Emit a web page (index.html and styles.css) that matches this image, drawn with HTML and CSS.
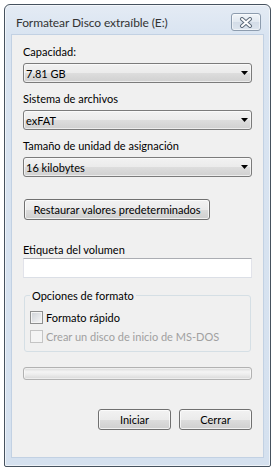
FILE: index.html
```html
<!DOCTYPE html>
<html lang="es">
<head>
<meta charset="utf-8">
<title>Formatear Disco extraíble (E:)</title>
<link rel="stylesheet" href="styles.css">
</head>
<body>
<div class="window">
  <div class="titlebar">
    <span class="title">Formatear Disco extraíble (E:)</span>
    <div class="close">
      <svg width="14" height="11" viewBox="0 0 14 11">
        <path d="M3 2 L11 9 M11 2 L3 9" stroke="#5f6c7b" stroke-width="4" stroke-linecap="round" fill="none"/>
        <path d="M3 2 L11 9 M11 2 L3 9" stroke="#ffffff" stroke-width="2" stroke-linecap="round" fill="none"/>
      </svg>
    </div>
  </div>
  <div class="client">
    <div class="field">
      <div class="label">Capacidad:</div>
      <div class="combo"><span>7.81 GB</span><svg class="arrow" width="7" height="4" viewBox="0 0 7 4"><polygon points="0,0 7,0 3.5,4" fill="#000"/></svg></div>
    </div>
    <div class="field">
      <div class="label">Sistema de archivos</div>
      <div class="combo"><span>exFAT</span><svg class="arrow" width="7" height="4" viewBox="0 0 7 4"><polygon points="0,0 7,0 3.5,4" fill="#000"/></svg></div>
    </div>
    <div class="field">
      <div class="label">Tamaño de unidad de asignación</div>
      <div class="combo"><span>16 kilobytes</span><svg class="arrow" width="7" height="4" viewBox="0 0 7 4"><polygon points="0,0 7,0 3.5,4" fill="#000"/></svg></div>
    </div>
    <div class="btn restore">Restaurar valores predeterminados</div>
    <div class="label vol-label">Etiqueta del volumen</div>
    <div class="textbox"></div>
    <fieldset class="group">
      <legend>Opciones de formato</legend>
      <div class="check-row"><span class="checkbox"></span><span>Formato rápido</span></div>
      <div class="check-row disabled"><span class="checkbox"></span><span>Crear un disco de inicio de MS-DOS</span></div>
    </fieldset>
    <div class="progress"></div>
    <div class="actions">
      <div class="btn action">Iniciar</div>
      <div class="btn action">Cerrar</div>
    </div>
  </div>
</div>
</body>
</html>
```
FILE: styles.css
```css
* { box-sizing: border-box; }
html, body { margin: 0; padding: 0; background: #ffffff; }
body {
  font-family: Lato, "Noto Sans", sans-serif;
  font-size: 11px;
  line-height: 15px;
  color: #000;
}
.window {
  margin: 4px 0 0 4px;
  width: 267px;
  border: 1px solid #46525f;
  border-radius: 6px 6px 2px 2px;
  background: linear-gradient(#e4ebf4, #d9e4f1 30px, #d5e1ef);
  box-shadow: inset 0 0 0 1px rgba(255,255,255,0.6);
  padding: 0 6px 8px;
}
.titlebar {
  display: flex;
  justify-content: space-between;
  height: 29px;
}
.title {
  padding: 10px 0 0 5px;
  font-size: 12px;
  letter-spacing: -0.1px;
  color: #333;
}
.close {
  margin: 8px 3px 0 0;
  width: 30px;
  height: 18px;
  border: 1px solid #8d9cae;
  border-radius: 3px;
  background: linear-gradient(#f1f5f9, #e1e8f0 50%, #d3dce7 51%, #dde5ee);
  box-shadow: inset 0 0 0 1px rgba(255,255,255,0.5);
  display: flex;
  align-items: center;
  justify-content: center;
}
.client {
  height: 424px;
  border: 1px solid #c2d1e3;
  background: #f0f0f0;
  padding: 9px 11px 0;
}
.field + .field { margin-top: 8px; }
.combo {
  margin-top: 4px;
  height: 20px;
  border: 1px solid #7b7b7b;
  border-radius: 3px;
  background: linear-gradient(#f2f2f2, #ebebeb 50%, #dddddd 51%, #d0d0d0);
  box-shadow: inset 0 0 0 1px rgba(255,255,255,0.6);
  display: flex;
  align-items: center;
  justify-content: space-between;
  padding: 0 3px 0 2px;
}
.arrow { display: block; }
.btn {
  height: 21px;
  border: 1px solid #707070;
  border-radius: 3px;
  background: linear-gradient(#f2f2f2, #ebebeb 50%, #dddddd 51%, #cfcfcf);
  box-shadow: inset 0 0 0 1px rgba(255,255,255,0.7);
  display: flex;
  align-items: center;
  justify-content: center;
}
.restore {
  margin: 22px 0 0 1px;
  width: 186px;
}
.vol-label { margin-top: 22px; }
.textbox {
  margin-top: 1px;
  height: 20px;
  background: #fff;
  border: 1px solid #dbdfe6;
  border-top-color: #abadb3;
  border-left-color: #e2e3ea;
  border-right-color: #e2e3ea;
}
.group {
  margin: 10px 1px 0;
  padding: 7px 5px 7px;
  border: 1px solid #d5dfe5;
  border-radius: 3px;
  min-width: 0;
}
.group legend {
  padding: 0 2px;
}
.check-row {
  display: flex;
  align-items: center;
  gap: 3px;
  height: 15px;
}
.check-row + .check-row { margin-top: 4px; }
.checkbox {
  width: 13px;
  height: 13px;
  border: 1px solid #8e8f8f;
  background: linear-gradient(135deg, #cdd1d6, #f7f7f7);
  box-shadow: inset 0 0 0 1px #f4f4f4;
}
.disabled { color: #a0a0a0; }
.disabled .checkbox {
  border-color: #c4c4c4;
  background: #f4f4f4;
  box-shadow: none;
}
.progress {
  margin-top: 15px;
  height: 13px;
  border: 1px solid #b2b2b2;
  border-radius: 3px;
  background: linear-gradient(#dadada, #f4f4f4 35%, #ececec 60%, #d8d8d8);
  box-shadow: inset 0 0 0 1px rgba(255,255,255,0.5);
}
.actions {
  margin-top: 29px;
  display: flex;
  justify-content: flex-end;
  gap: 8px;
}
.action { width: 73px; }
```
